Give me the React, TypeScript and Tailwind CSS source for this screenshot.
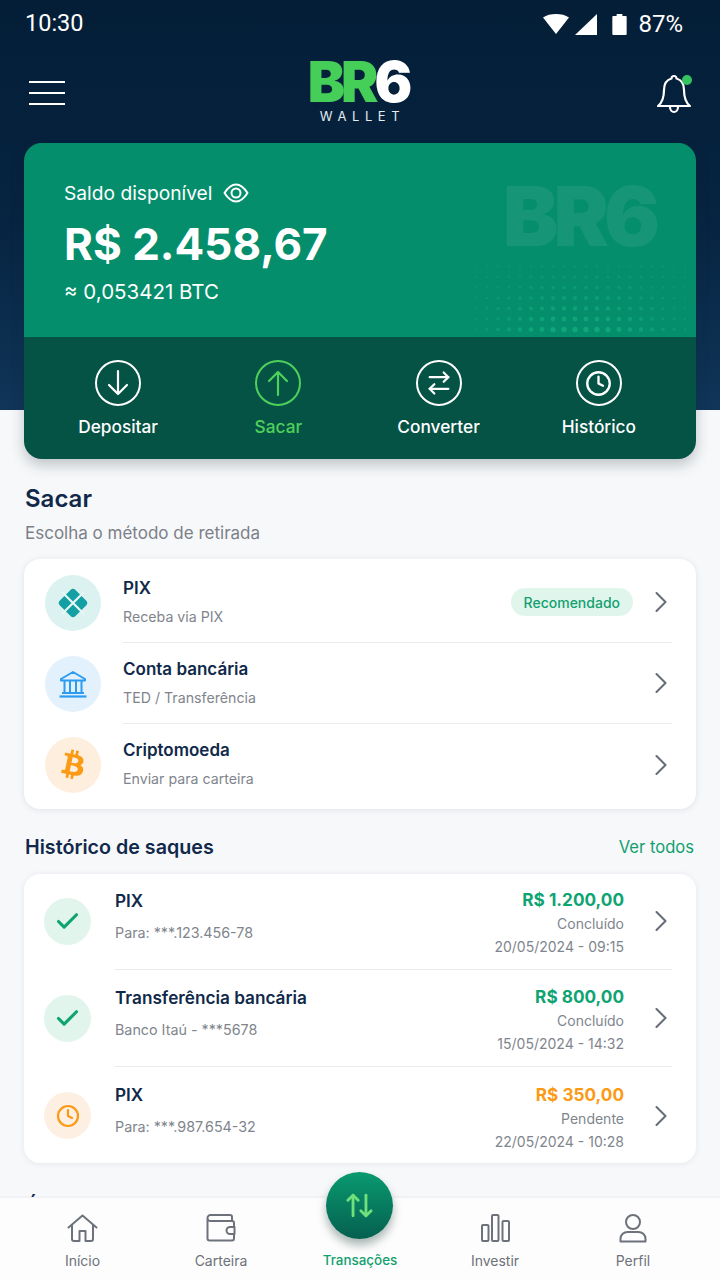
import { ArrowRightLeft, ArrowUpDown, Check, ChevronRight, Clock } from "lucide-react";
import { FaBtc } from "react-icons/fa";
import type { ReactNode } from "react";

const dots = Array.from({ length: 8 * 20 }, (_, i) => {
  const col = i % 20;
  const row = Math.floor(i / 20);
  const fade = Math.sin(((col + 1) / 21) * Math.PI);
  return { x: col * 11 + 4, y: row * 10.5 + 5, r: 1.1 + (row / 7) * 1.6 * fade, o: 0.2 + (row / 7) * 0.5 * fade };
});

function Chevron() {
  return <ChevronRight className="-mr-[7px] h-[36px] w-[36px] shrink-0 text-[#666d78]" strokeWidth={1.4} />;
}

function Action({ icon, label, active }: { icon: ReactNode; label: string; active?: boolean }) {
  return (
    <div className={`flex flex-col items-center ${active ? "text-[#4ed05a]" : "text-white"}`}>
      <div className="flex h-[46px] w-[46px] items-center justify-center rounded-full border-2 border-current">{icon}</div>
      <span className="mt-[10px] text-[17.3px] leading-[22px] font-medium">{label}</span>
    </div>
  );
}

function VArrow({ up }: { up?: boolean }) {
  return (
    <svg width="24" height="28" viewBox="0 0 24 28" fill="none" stroke="currentColor" strokeWidth="2.2" strokeLinecap="round" strokeLinejoin="round">
      {up ? <path d="M12 26V3M3 12l9-9 9 9" /> : <path d="M12 2v23M3 16l9 9 9-9" />}
    </svg>
  );
}

function MethodRow({ icon, bg, title, sub, badge, last }: { icon: ReactNode; bg: string; title: string; sub: string; badge?: boolean; last?: boolean }) {
  return (
    <div className="flex h-[81px] items-center pl-[21px]">
      <div className={`flex h-[56px] w-[56px] shrink-0 items-center justify-center rounded-full ${bg}`}>{icon}</div>
      <div className={`mr-[24px] ml-[22px] flex h-full flex-1 items-center ${last ? "" : "border-b border-[#e9ebee]"}`}>
        <div className="flex-1 pb-[2px]">
          <div className="text-[17px] leading-[22px] font-semibold text-[#10294a]">{title}</div>
          <div className="mt-[9px] text-[14.2px] leading-[18px] text-[#80858d]">{sub}</div>
        </div>
        {badge && (
          <span className="mr-[10px] flex h-[28px] items-center rounded-full bg-[#e0f6ec] px-[13px] text-[14px] font-medium text-[#12a06f]">Recomendado</span>
        )}
        <Chevron />
      </div>
    </div>
  );
}

function HistoryRow({ pending, title, sub, amount, status, date, last }: { pending?: boolean; title: string; sub: string; amount: string; status: string; date: string; last?: boolean }) {
  return (
    <div className="flex h-[97px] items-center pl-[20px]">
      <div className={`flex h-[47px] w-[47px] shrink-0 items-center justify-center rounded-full ${pending ? "bg-[#fdf0e3]" : "bg-[#e1f5ec]"}`}>
        {pending ? (
          <Clock className="h-[24px] w-[24px] text-[#fb9a14]" strokeWidth={2.2} />
        ) : (
          <Check className="h-[27px] w-[27px] text-[#0ea472]" strokeWidth={2.8} />
        )}
      </div>
      <div className={`mr-[24px] ml-[24px] flex h-full flex-1 items-center ${last ? "" : "border-b border-[#e9ebee]"}`}>
        <div className="flex-1 pb-[10px]">
          <div className="text-[17.2px] leading-[22px] font-semibold text-[#10294a]">{title}</div>
          <div className="mt-[11px] text-[14.3px] leading-[20px] text-[#80858d]">{sub}</div>
        </div>
        <div className="mr-[19px] pt-[3px] text-right">
          <div className={`text-[17.2px] leading-[24px] font-bold ${pending ? "text-[#fb9a14]" : "text-[#0ea472]"}`}>{amount}</div>
          <div className="mt-[2px] text-[14px] leading-[20px] text-[#80858d]">{status}</div>
          <div className="mt-[3px] text-[14px] leading-[20px] text-[#80858d]">{date}</div>
        </div>
        <Chevron />
      </div>
    </div>
  );
}

function NavItem({ icon, label }: { icon?: ReactNode; label: string }) {
  return (
    <div className="flex flex-col items-center text-[#6d727a]">
      <div className="flex h-[32px] items-center justify-center">{icon}</div>
      <span className="mt-[7px] text-[14px] leading-[20px]">{label}</span>
    </div>
  );
}

export default function App() {
  return (
    <div className="relative h-[1280px] w-[720px] overflow-hidden bg-[#f7f8fa] font-['Inter',sans-serif]">
      <div className="h-[410px] bg-gradient-to-b from-[#041e37] via-[#062340] to-[#103558] text-white">
        <div className="flex h-[46px] items-center justify-between pt-[2px] pr-[37px] pl-[25px] font-['Roboto',sans-serif] text-[23.5px]">
          <span>10:30</span>
          <div className="flex items-center">
            <svg width="26" height="20" viewBox="0 0 26 20" fill="white"><path d="M0 3.5C3.5 1 8 0 13 0s9.5 1 13 3.5L13 20z" /></svg>
            <svg className="ml-[6px]" width="22" height="21" viewBox="0 0 22 21" fill="white"><path d="M22 0v21H0z" /></svg>
            <svg className="ml-[15px]" width="15" height="21" viewBox="0 0 15 22" fill="white"><path d="M4.500 0h6v2H14a1 1 0 0 1 1 1v18a1 1 0 0 1-1 1H1a1 1 0 0 1-1-1V3a1 1 0 0 1 1-1h3.500z" /></svg>
            <span className="ml-[11px] text-[24px]">87%</span>
          </div>
        </div>
        <div className="relative flex h-[97px] items-start justify-between pt-[35px] pr-[28px] pl-[29px]">
          <div className="flex w-[36px] flex-col gap-[9px]">
            <div className="h-[2px] bg-white" />
            <div className="h-[2px] bg-white" />
            <div className="h-[2px] bg-white" />
          </div>
          <div className="absolute top-[15px] left-0 flex w-full flex-col items-center">
            <div className="flex pr-[4px] text-[56px] leading-[42px] font-black tracking-[-4px]">
              <div className="text-[#46cf58]">BR</div>
              <div className="text-white">6</div>
            </div>
            <div className="mt-[5px] pl-[5px] text-[13px] leading-[16px] tracking-[5.6px] text-[#e6ebef]">WALLET</div>
          </div>
          <svg className="-mt-[7px]" width="36" height="40" viewBox="0 0 36 40" fill="none" stroke="white" strokeWidth="2.200" strokeLinejoin="round">
            <path d="M18 2c-1.500 0-2.500 1-2.500 2.500C10 6 8 11 8 16c0 6-1 12-6 16h32c-5-4-6-10-6-16 0-5-2-10-7.500-11.500C20.500 3 19.500 2 18 2z" />
            <path d="M14 33c0 3 2 5 4 5s4-2 4-5" />
            <circle cx="31" cy="6" r="5" fill="#35c25f" stroke="none" />
          </svg>
        </div>
      </div>

      <div className="relative mx-[24px] -mt-[267px] h-[316px] overflow-hidden rounded-[18px] bg-[#055345] shadow-[0_6px_14px_rgba(15,40,50,0.25)]">
        <div className="relative h-[194px] bg-[#058e6c] pt-[38px] pl-[40px] text-white">
          <div className="absolute top-[30px] right-[41px] text-[83px] leading-[86px] font-black tracking-[-5px] text-white/[0.07]">BR6</div>
          <svg className="absolute right-0 bottom-0" width="224" height="86" viewBox="0 0 224 86" fill="#14b281">
            {dots.map((d, i) => (
              <circle key={i} cx={d.x} cy={d.y} r={d.r} opacity={d.o} />
            ))}
          </svg>
          <div className="relative flex h-[24px] items-center gap-[11px] text-[19.2px]">
            <span>Saldo disponível</span>
            <svg width="26" height="20" viewBox="0 0 26 20" fill="none" stroke="white" strokeWidth="2">
              <path d="M1.500 10C5 4.500 9 1.500 13 1.500s8 3 11.500 8.500C21 15.500 17 18.500 13 18.500S5 15.500 1.500 10z" strokeLinejoin="round" />
              <circle cx="13" cy="10" r="4.500" />
            </svg>
          </div>
          <div className="relative mt-[12px] text-[44px] leading-[54px] font-bold">R$ 2.458,67</div>
          <div className="relative mt-[9px] text-[20.5px] leading-[24px]">≈ 0,053421 BTC</div>
        </div>
        <div className="grid h-[122px] grid-cols-4 pt-[23px] pr-[17px] pl-[14px]">
          <Action icon={<VArrow />} label="Depositar" />
          <Action active icon={<VArrow up />} label="Sacar" />
          <Action icon={<ArrowRightLeft className="h-[28px] w-[28px]" strokeWidth={1.9} />} label="Converter" />
          <Action icon={<Clock className="h-[27px] w-[27px]" strokeWidth={2.1} />} label="Histórico" />
        </div>
      </div>

      <div className="px-[24px]">
        <div className="mt-[25px] pl-[1px] text-[24px] leading-[30px] font-semibold text-[#10294a]">Sacar</div>
        <div className="mt-[8px] pl-[1px] text-[17px] leading-[22px] text-[#7b8088]">Escolha o método de retirada</div>
        <div className="mt-[15px] h-[250px] rounded-[16px] bg-white pt-[3px] shadow-[0_1px_6px_rgba(20,40,70,0.1)]">
          <MethodRow
            bg="bg-[#dcf2f1]"
            title="PIX"
            sub="Receba via PIX"
            badge
            icon={
              <svg width="34" height="34" viewBox="0 0 34 34">
                <rect x="6" y="6" width="22" height="22" rx="3.5" transform="rotate(45 17 17)" fill="#12a0a4" />
                <path d="M6 6l22 22M28 6L6 28" stroke="#e6f6f5" strokeWidth="2.200" />
              </svg>
            }
          />
          <MethodRow
            bg="bg-[#e3f1fc]"
            title="Conta bancária"
            sub="TED / Transferência"
            icon={
              <svg width="28" height="28" viewBox="0 0 28 28" fill="none" stroke="#2b9cf0" strokeWidth="2">
                <path d="M14 2L2 9v1.500h24V9z" strokeLinejoin="round" />
                <path d="M5.500 11v11M11 11v11M17 11v11M22.500 11v11M3 23h22" />
                <path d="M0.500 26.500h27" strokeWidth="2.200" />
              </svg>
            }
          />
          <MethodRow bg="bg-[#feeedd]" title="Criptomoeda" sub="Enviar para carteira" last icon={<FaBtc className="h-[29px] w-[29px] rotate-[12deg] text-[#fb9a14]" />} />
        </div>

        <div className="mt-[25px] flex items-center justify-between pr-[2px] pl-[1px]">
          <span className="text-[19.7px] leading-[26px] font-semibold text-[#10294a]">Histórico de saques</span>
          <span className="pt-[1px] text-[16.6px] text-[#12a06f]">Ver todos</span>
        </div>
        <div className="mt-[14px] flow-root h-[289px] rounded-[16px] bg-white shadow-[0_1px_6px_rgba(20,40,70,0.08)]">
          <div className="-mt-px">
            <HistoryRow title="PIX" sub="Para: ***.123.456-78" amount="R$ 1.200,00" status="Concluído" date="20/05/2024 - 09:15" />
            <HistoryRow title="Transferência bancária" sub="Banco Itaú - ***5678" amount="R$ 800,00" status="Concluído" date="15/05/2024 - 14:32" />
            <HistoryRow pending title="PIX" sub="Para: ***.987.654-32" amount="R$ 350,00" status="Pendente" date="22/05/2024 - 10:28" last />
          </div>
        </div>
        <div className="mt-[30px] pl-[1px] text-[20px] leading-[26px] font-semibold text-[#10294a]">Últimos Pagamentos</div>
      </div>

      <nav className="absolute inset-x-0 bottom-0 grid h-[82px] grid-cols-[139px_138px_140px_130px_146px] bg-[#fdfdfd] pt-[14px] pl-[13px] shadow-[0_-1px_3px_rgba(20,40,70,0.05)]">
        <NavItem label="Início" icon={
          <svg width="31" height="28" viewBox="0 0 31 28" fill="none" stroke="currentColor" strokeWidth="2" strokeLinejoin="round" strokeLinecap="round"><path d="M1.500 13.500L15.500 1.500l14 12M5 10.500V25a2 2 0 0 0 2 2h5.500V17h6v10H24a2 2 0 0 0 2-2V10.500" /></svg>
        } />
        <NavItem label="Carteira" icon={
          <svg width="30" height="28" viewBox="0 0 30 28" fill="none" stroke="currentColor" strokeWidth="2" strokeLinejoin="round"><path d="M26 6.500V3a2 2 0 0 0-2-2H4.500a3 3 0 0 0-3 3v20.500a2 2 0 0 0 2 2H26a2 2 0 0 0 2-2V20M1.500 4a3 3 0 0 0 3 3H26a2 2 0 0 1 2 2v4" /><path d="M28.500 13H24a3.500 3.500 0 0 0 0 7h4.500z" /></svg>
        } />
        <NavItem label="" />
        <NavItem label="Investir" icon={
          <svg width="29" height="28" viewBox="0 0 29 28" fill="none" stroke="currentColor" strokeWidth="2" strokeLinejoin="round"><rect x="1" y="11" width="6.500" height="16" rx="1" /><rect x="11" y="1" width="6.500" height="26" rx="1" /><rect x="21.500" y="7" width="6.500" height="20" rx="1" /></svg>
        } />
        <NavItem label="Perfil" icon={
          <svg width="28" height="29" viewBox="0 0 28 29" fill="none" stroke="currentColor" strokeWidth="2"><circle cx="14" cy="8" r="7" /><path d="M1.500 27.500V25c0-4.500 3.500-7 7-7h11c3.500 0 7 2.500 7 7v2.500z" strokeLinejoin="round" /></svg>
        } />
      </nav>
      <div className="absolute bottom-[41px] left-[326px] flex h-[67px] w-[67px] items-center justify-center rounded-full bg-gradient-to-b from-[#0a9a70] to-[#05604f] shadow-[0_6px_10px_rgba(10,50,40,0.35)]">
        <ArrowUpDown className="h-[31px] w-[31px] text-[#6fe07a]" strokeWidth={2.2} />
      </div>
      <span className="absolute bottom-[10px] left-[290px] w-[140px] text-center text-[13.4px] leading-[20px] font-medium text-[#12a06f]">Transações</span>
    </div>
  );
}
